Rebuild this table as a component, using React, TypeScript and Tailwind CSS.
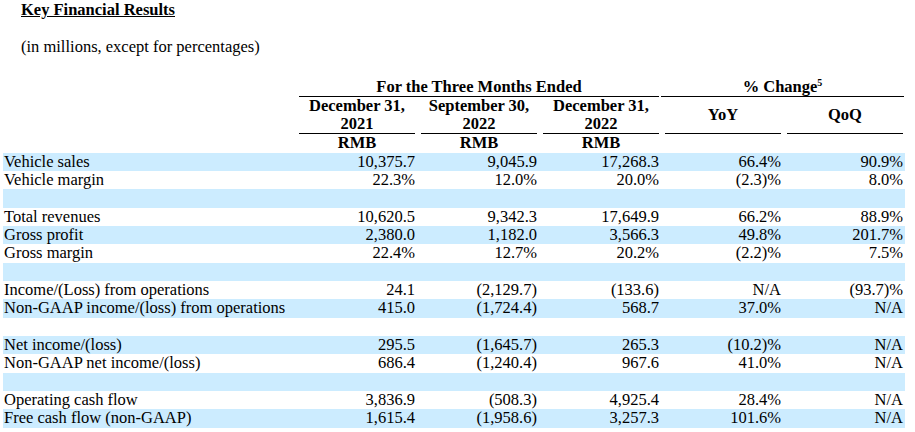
import React from "react";

const rows: string[][] = [
  ["Vehicle sales", "10,375.7", "9,045.9", "17,268.3", "66.4%", "90.9%"],
  ["Vehicle margin", "22.3%", "12.0%", "20.0%", "(2.3)%", "8.0%"],
  ["", "", "", "", "", ""],
  ["Total revenues", "10,620.5", "9,342.3", "17,649.9", "66.2%", "88.9%"],
  ["Gross profit", "2,380.0", "1,182.0", "3,566.3", "49.8%", "201.7%"],
  ["Gross margin", "22.4%", "12.7%", "20.2%", "(2.2)%", "7.5%"],
  ["", "", "", "", "", ""],
  ["Income/(Loss) from operations", "24.1", "(2,129.7)", "(133.6)", "N/A", "(93.7)%"],
  ["Non-GAAP income/(loss) from operations", "415.0", "(1,724.4)", "568.7", "37.0%", "N/A"],
  ["", "", "", "", "", ""],
  ["Net income/(loss)", "295.5", "(1,645.7)", "265.3", "(10.2)%", "N/A"],
  ["Non-GAAP net income/(loss)", "686.4", "(1,240.4)", "967.6", "41.0%", "N/A"],
  ["", "", "", "", "", ""],
  ["Operating cash flow", "3,836.9", "(508.3)", "4,925.4", "28.4%", "N/A"],
  ["Free cash flow (non-GAAP)", "1,615.4", "(1,958.6)", "3,257.3", "101.6%", "N/A"],
];

const dates: [string, string][] = [
  ["December 31,", "2021"],
  ["September 30,", "2022"],
  ["December 31,", "2022"],
];

export default function App() {
  return (
    <div className="w-[915px] h-[432px] overflow-hidden bg-white text-black font-['Liberation_Serif',serif] text-[16.5px]">
      <div className="pl-[21px] pt-[1px] leading-[18px] font-bold underline">Key Financial Results</div>
      <div className="pl-[21px] mt-[18.5px] leading-[18px]">(in millions, except for percentages)</div>

      <div className="ml-[3px] w-[902px] mt-[22.2px]">
        {/* group headers */}
        <div className="flex leading-[18px] font-bold">
          <div className="w-[296px] shrink-0" />
          <div className="w-[360px] shrink-0 text-center border-b border-black">For the Three Months Ended</div>
          <div className="w-[2px] shrink-0" />
          <div className="w-[243px] shrink-0 text-center border-b border-black">
            % Change<span className="text-[10px] leading-none relative -top-[6px]">5</span>
          </div>
        </div>

        {/* date headers */}
        <div className="flex gap-[6px] font-bold leading-[18px]">
          <div className="w-[290px] shrink-0" />
          {dates.map(([a, b], i) => (
            <div key={i} className="w-[116px] shrink-0 text-center border-b border-black">
              <div>{a}</div>
              <div>{b}</div>
            </div>
          ))}
          <div className="w-[116px] shrink-0 h-[37px] flex items-center justify-center border-b border-black">YoY</div>
          <div className="w-[116px] shrink-0 h-[37px] flex items-center justify-center border-b border-black">QoQ</div>
        </div>

        {/* RMB row */}
        <div className="flex gap-[6px] font-bold leading-[18px] h-[19px]">
          <div className="w-[290px] shrink-0" />
          <div className="w-[116px] shrink-0 text-center">RMB</div>
          <div className="w-[116px] shrink-0 text-center">RMB</div>
          <div className="w-[116px] shrink-0 text-center">RMB</div>
        </div>

        {/* body rows */}
        {rows.map((r, i) => (
          <div
            key={i}
            className={`flex gap-[6px] h-[18.33px] leading-[18px] pr-[2px] ${i % 2 === 0 ? "bg-[#ccecff]" : "bg-white"}`}
          >
            <div className="w-[290px] shrink-0 pl-[1px] whitespace-nowrap">{r[0]}</div>
            {r.slice(1).map((v, j) => (
              <div key={j} className="w-[116px] shrink-0 text-right whitespace-nowrap">
                {v}
              </div>
            ))}
          </div>
        ))}
      </div>
    </div>
  );
}
